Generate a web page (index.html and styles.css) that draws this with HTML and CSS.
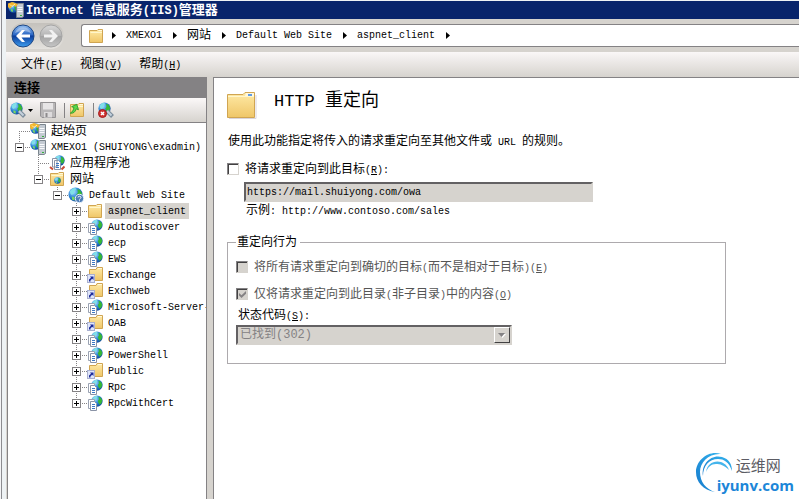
FILE: index.html
```html
<!DOCTYPE html>
<html lang="zh-CN">
<head>
  <meta charset="UTF-8">
  <meta name="viewport" content="width=device-width, initial-scale=1.0">
  <title>Internet 信息服务(IIS)管理器</title>
  <link rel="stylesheet" href="styles.css">
</head>
<body>

  <!-- Shared icons -->
  <svg class="sprite" aria-hidden="true">
    <defs>
      <linearGradient id="gold" x1="0" y1="0" x2="0" y2="1">
        <stop offset="0" stop-color="#ffeaa6"/><stop offset="1" stop-color="#efc668"/>
      </linearGradient>
      <radialGradient id="sea" cx=".35" cy=".3" r=".8">
        <stop offset="0" stop-color="#a8e0ff"/><stop offset=".5" stop-color="#2d86d8"/><stop offset="1" stop-color="#0b3f94"/>
      </radialGradient>
      <linearGradient id="blueball" x1="0" y1="0" x2="0" y2="1">
        <stop offset="0" stop-color="#8fbcf0"/><stop offset=".45" stop-color="#2a66c4"/><stop offset=".5" stop-color="#0b3c9c"/><stop offset="1" stop-color="#3fa0f0"/>
      </linearGradient>
      <linearGradient id="grayball" x1="0" y1="0" x2="0" y2="1">
        <stop offset="0" stop-color="#d8d8d8"/><stop offset=".48" stop-color="#b4b4b4"/><stop offset=".5" stop-color="#a2a2a2"/><stop offset="1" stop-color="#c6c6c6"/>
      </linearGradient>
      <linearGradient id="swoosh" x1="0" y1="1" x2="1" y2="0">
        <stop offset="0" stop-color="#1479cc"/><stop offset="1" stop-color="#35b4ee"/>
      </linearGradient>
    </defs>
    <symbol id="globe" viewBox="0 0 16 16">
      <circle cx="8" cy="8" r="7.5" fill="url(#sea)"/>
      <path d="M2 4.5 5 1.5 8 1 8.5 3 6.500 4.500 6.500 7 4 8.500 2.500 7z" fill="#7fe0e8"/>
      <path d="M10 2 13 3.500 15 7 14 11 11.500 13 10 10.500 9 8 10.500 6z" fill="#36b836"/>
      <path d="M4 10 7 11 7 14.500 4.500 13.500z" fill="#7ad860"/>
    </symbol>
    <symbol id="folder" viewBox="0 0 16 16">
      <path d="M1.500 2.500H9L10 1.500H14.500V14.500H1.500z" fill="url(#gold)" stroke="#d0a552"/>
      <path d="M10.500 2.500H14" stroke="#fff8dc"/>
      <path d="M2.500 4.500H14" stroke="#fff6cc"/>
    </symbol>
    <symbol id="vfolder" viewBox="0 0 16 16">
      <path d="M2.500 2.500H9L10 .5H15.500V13.500H2.500z" fill="url(#gold)" stroke="#d0a552"/>
      <path d="M11 1.500H15" stroke="#fff8dc"/>
      <rect x=".5" y="7.500" width="7" height="8" fill="#dfe5fa" stroke="#a9b0d0"/>
      <path d="M2 14.500V12.500L4 10.800 3 9.500H6.500V13L5.200 11.800 3.500 13.200V14.500z" fill="#1b2a9a"/>
    </symbol>
    <symbol id="app" viewBox="0 0 16 16">
      <use href="#globe" x="4" y="0" width="12" height="12"/>
      <path d="M1.500 4.500H7.500V13.500H1.500z" fill="#fff" stroke="#9aa2b2"/>
      <path d="M3.500 6.500H7.500L9.500 8.500V15.500H3.500z" fill="#fff" stroke="#8a93a6"/>
      <path d="M5 9.500H8M5 11.500H8M5 13.500H8" stroke="#3d78c4"/>
    </symbol>
    <symbol id="pool" viewBox="0 0 16 16">
      <use href="#globe" x="5" y="0" width="11" height="11"/>
      <path d="M3.500 3.500H8V12H3.500zM5.500 5.500H9.500L11.500 7.500V14.500H5.500z" fill="#fff" stroke="#8a93a6"/>
      <path d="M7 8.500H10M7 10.500H10M7 12.500H10" stroke="#3d78c4"/>
      <path d="M1 12 4 14.500M15.500 11.500 12.500 14.500" stroke="#c94a38" stroke-width="2"/>
    </symbol>
    <symbol id="server" viewBox="0 0 16 16">
      <use href="#globe" x="0" y="0" width="11" height="11"/>
      <path d="M8.500 2.500 10 1.500H15.500V14.500L14 15.500H8.500z" fill="#c3cad2" stroke="#7b868e"/>
      <path d="M9.500 5.500H14.500M9.500 7.500H14.500M9.500 9.500H14.500" stroke="#f7f9fb"/>
      <path d="M12 13.500H14" stroke="#36b23c"/>
    </symbol>
    <symbol id="start" viewBox="0 0 16 16">
      <use href="#server"/>
      <path d="M0 1.500 4 0 10 2 8 5 5 3 2 7 0 5z" fill="#f4b62e"/>
      <path d="M2 2.500 4 4.500 7 2" stroke="#fff3b0" fill="none"/>
    </symbol>
    <symbol id="sites" viewBox="0 0 16 16">
      <use href="#folder"/>
      <use href="#globe" x="5" y="6" width="7" height="7"/>
    </symbol>
    <symbol id="site" viewBox="0 0 16 16">
      <use href="#globe" width="15" height="15"/>
      <circle cx="11.500" cy="11.500" r="4.200" fill="#4d7db8" stroke="#e4effa"/>
      <path d="M10 10.500C10 8.800 13 8.800 13 10.500 13 11.500 11.500 11.500 11.500 12.500M11.500 13.300V14.300" fill="none" stroke="#fff"/>
    </symbol>
    <symbol id="connect" viewBox="0 0 16 16">
      <use href="#globe" width="13" height="13"/>
      <path d="M9 9 14.500 14.500" stroke="#7c8c9b" stroke-width="4"/>
      <path d="M9 9 13.500 13.500" stroke="#c5d2dd" stroke-width="2"/>
    </symbol>
    <symbol id="disconnect" viewBox="0 0 16 16">
      <use href="#connect"/>
      <circle cx="4.500" cy="11.500" r="4" fill="#d23430" stroke="#a31d1d"/>
      <path d="M3 10 6 13M6 10 3 13" stroke="#fff" stroke-width="1.500"/>
    </symbol>
    <symbol id="save" viewBox="0 0 16 16">
      <path d="M.5 .5H15.500V15.500H2L.5 14z" fill="#b9b7b8" stroke="#949294"/>
      <path d="M3 1H13V7.500H3z" fill="#e7e5e6"/>
      <path d="M4 10H12V15.500H4z" fill="#dddbdc"/>
      <path d="M5.500 11H7.500V15H5.500z" fill="#8c8a8c"/>
    </symbol>
    <symbol id="up" viewBox="0 0 16 16">
      <use href="#folder"/>
      <path d="M3 12.500C6 12 7.500 9.500 7 6.500H9.500L6 2 2 6H4.500C5 8.500 4.500 11 3 12.500z" fill="#5bd84b" stroke="#2c9a2a" stroke-width=".8" transform="rotate(20 6 7)"/>
    </symbol>
    <symbol id="arrow" viewBox="0 0 4 7"><path d="M0 0 4 3.500 0 7z"/></symbol>
  </svg>

  <div class="window">
    <header class="titlebar">
      <svg class="icon"><use href="#start"/></svg>
      <h1><span class="latin">Internet </span>信息服务<span class="latin">(IIS)</span>管理器</h1>
    </header>

    <div class="navbar">
      <div class="history">
        <button type="button" aria-label="后退">
          <svg width="24" height="24" viewBox="0 0 24 24">
            <circle cx="12" cy="12" r="11" fill="url(#blueball)" stroke="#1d4684"/>
            <path d="M4 9A8.500 8.500 0 0 1 20 9Q12 5 4 9z" fill="#fff" opacity=".35"/>
            <path d="M5 12 11 6H14L10.500 10.500H19V13.500H10.500L14 18H11z" fill="#fff"/>
          </svg>
        </button>
        <button type="button" aria-label="前进">
          <svg width="24" height="24" viewBox="0 0 24 24">
            <circle cx="12" cy="12" r="11" fill="url(#grayball)" stroke="#a5a5a5"/>
            <path d="M19 12 13 6H10L13.500 10.500H5V13.500H13.500L10 18H13z" fill="#f2f2f2"/>
          </svg>
        </button>
      </div>
      <nav class="address" aria-label="路径">
        <svg class="icon"><use href="#folder"/></svg>
        <svg class="arrow"><use href="#arrow"/></svg>
        <a href="#" class="latin">XMEXO1</a>
        <svg class="arrow"><use href="#arrow"/></svg>
        <a href="#">网站</a>
        <svg class="arrow"><use href="#arrow"/></svg>
        <a href="#" class="latin">Default Web Site</a>
        <svg class="arrow"><use href="#arrow"/></svg>
        <a href="#" class="latin">aspnet_client</a>
        <svg class="arrow"><use href="#arrow"/></svg>
      </nav>
    </div>

    <div class="menubar">
      <button type="button">文件<span class="latin">(<u>F</u>)</span></button>
      <button type="button">视图<span class="latin">(<u>V</u>)</span></button>
      <button type="button">帮助<span class="latin">(<u>H</u>)</span></button>
    </div>

    <div class="workspace">
      <aside class="connections">
        <h2>连接</h2>
        <div class="toolbar">
          <button type="button" class="split" aria-label="连接"><svg class="icon"><use href="#connect"/></svg><svg width="5" height="3"><path d="M0 0H5L2.500 3z"/></svg></button>
          <button type="button" aria-label="保存"><svg class="icon"><use href="#save"/></svg></button>
          <span class="separator"></span>
          <button type="button" aria-label="向上"><svg class="icon"><use href="#up"/></svg></button>
          <span class="separator"></span>
          <button type="button" aria-label="断开"><svg class="icon"><use href="#disconnect"/></svg></button>
        </div>

        <ul class="tree">
          <li><div class="row leaf"><svg class="icon"><use href="#start"/></svg><span class="label">起始页</span></div></li>
          <li>
            <div class="row"><button type="button" class="expander" aria-label="折叠"></button><svg class="icon"><use href="#server"/></svg><span class="label latin">XMEXO1 (SHUIYONG\exadmin)</span></div>
            <ul>
              <li><div class="row leaf"><svg class="icon"><use href="#pool"/></svg><span class="label">应用程序池</span></div></li>
              <li>
                <div class="row"><button type="button" class="expander" aria-label="折叠"></button><svg class="icon"><use href="#sites"/></svg><span class="label">网站</span></div>
                <ul>
                  <li>
                    <div class="row"><button type="button" class="expander" aria-label="折叠"></button><svg class="icon"><use href="#site"/></svg><span class="label latin">Default Web Site</span></div>
                    <ul>
                      <li><div class="row"><button type="button" class="expander closed" aria-label="展开"></button><svg class="icon"><use href="#folder"/></svg><span class="label latin selected">aspnet_client</span></div></li>
                      <li><div class="row"><button type="button" class="expander closed" aria-label="展开"></button><svg class="icon"><use href="#app"/></svg><span class="label latin">Autodiscover</span></div></li>
                      <li><div class="row"><button type="button" class="expander closed" aria-label="展开"></button><svg class="icon"><use href="#app"/></svg><span class="label latin">ecp</span></div></li>
                      <li><div class="row"><button type="button" class="expander closed" aria-label="展开"></button><svg class="icon"><use href="#app"/></svg><span class="label latin">EWS</span></div></li>
                      <li><div class="row"><button type="button" class="expander closed" aria-label="展开"></button><svg class="icon"><use href="#vfolder"/></svg><span class="label latin">Exchange</span></div></li>
                      <li><div class="row"><button type="button" class="expander closed" aria-label="展开"></button><svg class="icon"><use href="#vfolder"/></svg><span class="label latin">Exchweb</span></div></li>
                      <li><div class="row"><button type="button" class="expander closed" aria-label="展开"></button><svg class="icon"><use href="#app"/></svg><span class="label latin">Microsoft-Server-</span></div></li>
                      <li><div class="row"><button type="button" class="expander closed" aria-label="展开"></button><svg class="icon"><use href="#vfolder"/></svg><span class="label latin">OAB</span></div></li>
                      <li><div class="row"><button type="button" class="expander closed" aria-label="展开"></button><svg class="icon"><use href="#app"/></svg><span class="label latin">owa</span></div></li>
                      <li><div class="row"><button type="button" class="expander closed" aria-label="展开"></button><svg class="icon"><use href="#app"/></svg><span class="label latin">PowerShell</span></div></li>
                      <li><div class="row"><button type="button" class="expander closed" aria-label="展开"></button><svg class="icon"><use href="#vfolder"/></svg><span class="label latin">Public</span></div></li>
                      <li><div class="row"><button type="button" class="expander closed" aria-label="展开"></button><svg class="icon"><use href="#app"/></svg><span class="label latin">Rpc</span></div></li>
                      <li><div class="row"><button type="button" class="expander closed" aria-label="展开"></button><svg class="icon"><use href="#app"/></svg><span class="label latin">RpcWithCert</span></div></li>
                    </ul>
                  </li>
                </ul>
              </li>
            </ul>
          </li>
        </ul>
      </aside>

      <main class="content">
        <div class="heading">
          <svg width="30" height="30" viewBox="0 0 30 30">
            <path d="M2 28.500H29V5" fill="none" stroke="#d9d5dc"/>
            <path d="M.5 4.500H16L18 2.500H27.500V27.500H.5z" fill="url(#gold)" stroke="#d0a552"/>
            <path d="M18 6 19 3H27V6z" fill="#fff8e0"/>
            <path d="M21 4H25V6H21z" fill="#5f9be6"/>
            <path d="M1 6.500H27" stroke="#fff6cc"/>
          </svg>
          <h2><span class="latin">HTTP </span>重定向</h2>
        </div>
        <p class="intro">使用此功能指定将传入的请求重定向至其他文件或<span class="latin"> URL </span>的规则。</p>

        <form>
          <div class="check">
            <input type="checkbox" id="redirect">
            <label for="redirect">将请求重定向到此目标<span class="latin">(<u>R</u>):</span></label>
          </div>
          <div class="target">
            <input type="text" class="latin" aria-label="目标" value="https://mail.shuiyong.com/owa" disabled>
            <p>示例<span class="latin">: http://www.contoso.com/sales</span></p>
          </div>

          <fieldset>
            <legend>重定向行为</legend>
            <div class="check">
              <input type="checkbox" id="exact" disabled>
              <label for="exact">将所有请求重定向到确切的目标<span class="latin">(</span>而不是相对于目标<span class="latin">)(<u>E</u>)</span></label>
            </div>
            <div class="check">
              <input type="checkbox" id="only" checked disabled>
              <label for="only">仅将请求重定向到此目录<span class="latin">(</span>非子目录<span class="latin">)</span>中的内容<span class="latin">(<u>O</u>)</span></label>
            </div>
            <label class="status-label" for="status">状态代码<span class="latin">(<u>S</u>):</span></label>
            <div class="select">
              <select id="status" disabled><option>已找到(302)</option></select>
              <span class="drop"><svg width="8" height="5"><path d="M1 1H8L4.500 5z" fill="#fff"/><path d="M0 0H7L3.500 4z" fill="#848284"/></svg></span>
            </div>
          </fieldset>
        </form>
      </main>
    </div>
  </div>

  <div class="watermark">
    <svg width="40" height="42" viewBox="0 0 40 42" fill="none">
      <path d="M20 40C8 38 1 30 1 20 1 8 14-2 26 2 14 1 5 10 5 20 5 30 11 37 20 40z" fill="url(#swoosh)"/>
      <path d="M8 24C6 12 16 2 27 5 34 7 37 12 37 19 34 10 29 7 23 7 14 7 8 14 8 24z" fill="url(#swoosh)"/>
      <path d="M11 20C12 12 19 8 26 10 31 12 33 15 34 18 29 13 25 12 21 12 16 12 13 15 11 20z" fill="#45b5ec"/>
    </svg>
    <div class="brand">
      <span class="brand-name">运维网</span>
      <span class="brand-url">iyunv.com</span>
    </div>
  </div>

</body>
</html>
```

FILE: styles.css
```css
* {
  box-sizing: border-box;
}

body {
  margin: 0;
  height: 100vh;
  overflow: hidden;
  padding: 1px 0 0 6px;
  background: linear-gradient(90deg, #f4f4f6 1px, #8c8c90 1px, #8c8c90 2px, #eef2f4 2px);
  font-family: "Liberation Mono", "Noto Sans CJK SC", monospace;
  font-size: 12px;
  line-height: 16px;
  color: #000;
}

h1, h2, p, ul, fieldset {
  margin: 0;
  padding: 0;
}

button {
  margin: 0;
  padding: 0;
  border: none;
  background: none;
  font: inherit;
  color: inherit;
}

/* Half-width characters are half as wide as the 12px Chinese ones */
.latin {
  font-size: 10px;
  white-space: pre;
}

.sprite {
  position: absolute;
  width: 0;
  height: 0;
}

.icon {
  flex: none;
  width: 16px;
  height: 16px;
}

.window {
  display: flex;
  flex-direction: column;
  height: 100%;
  background: #d6d3ce;
}

/* Title bar */
.titlebar {
  display: flex;
  align-items: center;
  gap: 2px;
  height: 18px;
  padding-left: 2px;
  background: #08246b;
  color: #fff;
}

.titlebar h1 {
  padding-top: 2px;
  font-size: 13px;
}

.titlebar .latin {
  font-size: 12px;
}

/* Back, forward and the address */
.navbar {
  display: flex;
  align-items: center;
  height: 33px;
  padding-left: 4px;
}

.history {
  display: flex;
  gap: 4px;
  padding: 1px;
  border-radius: 14px;
  background: linear-gradient(#c4c1bc, #e4e2de);
}

.history button,
.history svg {
  display: block;
}

.address {
  display: flex;
  flex: 1;
  align-items: center;
  height: 23px;
  margin-left: 17px;
  padding-left: 6px;
  border: 1px solid #848284;
  border-right: none;
  border-radius: 3px 0 0 3px;
  background: #fff;
}

.address a {
  color: #000;
  text-decoration: none;
}

.arrow {
  width: 4px;
  height: 7px;
  margin: 0 10px 0 11px;
}

.icon + .arrow {
  margin-left: 8px;
}

/* Menu */
.menubar {
  display: flex;
  gap: 17px;
  height: 25px;
  padding: 2px 0 0 15px;
  background: linear-gradient(#faf7f7, #d6d3ce);
}

.workspace {
  display: flex;
  flex: 1;
  gap: 6px;
  min-height: 0;
}

/* Connections pane */
.connections {
  flex: none;
  width: 200px;
  margin-left: 1px;
  border: 1px solid #848284;
  border-bottom: none;
  background: #fff;
  overflow: hidden;
}

.connections h2 {
  padding: 3px 6px 1px;
  background: #848284;
  font-size: 13px;
  line-height: 16px;
}

.toolbar {
  display: flex;
  align-items: center;
  height: 25px;
  padding-left: 2px;
  border-bottom: 1px solid #848284;
  background: linear-gradient(#fbf8f8, #d6d3ce);
}

.toolbar button {
  display: flex;
  align-items: center;
  gap: 2px;
}

.toolbar .split {
  margin-right: 7px;
}

.separator {
  width: 1px;
  height: 15px;
  margin: 0 4px 0 8px;
  background: #848284;
}

/* Tree, with dotted lines drawn as backgrounds */
.tree,
.tree ul {
  list-style: none;
}

.tree {
  padding-left: 7px;
}

.tree ul {
  padding-left: 19px;
}

.tree li {
  background: repeating-linear-gradient(#848284 0 1px, transparent 1px 2px) 4px 0 / 1px 100% no-repeat;
}

.tree > li:first-child {
  background-position: 4px 8px;
}

.tree li:last-child {
  background-size: 1px 8px;
}

.row {
  display: flex;
  align-items: center;
  height: 16px;
  background: repeating-linear-gradient(90deg, #848284 0 1px, transparent 1px 2px) 4px 8px / 12px 1px no-repeat;
}

.leaf {
  padding-left: 15px;
}

.expander {
  flex: none;
  width: 9px;
  height: 9px;
  margin-right: 6px;
  border: 1px solid #848284;
  background: linear-gradient(#000, #000) center / 5px 1px no-repeat, #fff;
}

.expander.closed {
  background: linear-gradient(#000, #000) center / 5px 1px no-repeat, linear-gradient(#000, #000) center / 1px 5px no-repeat, #fff;
}

.label {
  height: 16px;
  margin-left: 2px;
  padding: 1px 3px 0;
  white-space: pre;
}

.selected {
  background: #d6d3ce;
}

/* Redirect page */
.content {
  flex: 1;
  min-width: 0;
  padding: 12px 73px 0 13px;
  border-top: 1px solid #848284;
  border-left: 1px solid #848284;
  background: #fff;
}

.heading {
  display: flex;
  gap: 17px;
}

.heading h2 {
  font-size: 18px;
  font-weight: normal;
  line-height: 22px;
}

.heading .latin {
  font-size: 17px;
}

.intro {
  margin: 14px 0 10px;
  padding-left: 1px;
}

.check {
  display: flex;
  align-items: center;
  gap: 6px;
  height: 16px;
}

.check label {
  padding-top: 2px;
}

.check input {
  appearance: none;
  flex: none;
  width: 12px;
  height: 12px;
  margin: 0;
  border: 1px solid #d6d3ce;
  border-top-color: #848284;
  border-left-color: #848284;
  box-shadow: inset 1px 1px #424142;
  background: #fff;
}

.check input:disabled {
  background: #d6d3ce;
}

.check input:checked::before {
  content: "";
  display: block;
  width: 7px;
  height: 7px;
  margin: 2px;
  background: #848284;
  clip-path: polygon(0 28%, 36% 62%, 100% 0, 100% 38%, 36% 100%, 0 66%);
}

.check input:disabled + label {
  color: #555;
}

.target {
  display: flex;
  flex-direction: column;
  max-width: 366px;
  margin-top: 5px;
  padding-left: 17px;
}

.target input {
  width: 100%;
  height: 20px;
  padding: 0 1px;
  border: 2px solid #d6d3ce;
  border-top-color: #636163;
  border-left-color: #636163;
  background: #d6d3ce;
  font-family: inherit;
  color: #000;
}

.target p {
  padding: 1px 2px;
}

fieldset {
  display: flex;
  flex-direction: column;
  min-width: 0;
  margin-top: 12px;
  padding: 8px 8px 18px;
  border: 1px solid #adaaad;
}

legend {
  padding: 2px 3px 0 1px;
}

fieldset .check {
  margin-bottom: 11px;
}

fieldset .check + .status-label {
  margin-top: -6px;
}

.status-label {
  padding: 1px 2px 0;
}

.select {
  display: flex;
  max-width: 276px;
  height: 20px;
  border: 2px solid #d6d3ce;
  border-top-color: #636163;
  border-left-color: #636163;
  background: #d6d3ce;
}

.select select {
  appearance: none;
  flex: 1;
  padding: 0 2px;
  border: none;
  background: none;
  font: inherit;
  color: #848284;
  opacity: 1;
}

.drop {
  display: flex;
  align-items: center;
  justify-content: center;
  width: 16px;
  border: 1px solid #fff;
  border-right-color: #424142;
  border-bottom-color: #424142;
}

/* Site logo over the corner of the page */
.watermark {
  position: absolute;
  right: 5px;
  bottom: 5px;
  display: flex;
}

.brand {
  display: flex;
  flex-direction: column;
  margin-left: -18px;
  padding-top: 1px;
}

.brand-name {
  padding-left: 19px;
  font-family: "Noto Sans CJK SC", sans-serif;
  font-size: 15px;
  line-height: 23px;
  color: #5c5c64;
}

.brand-url {
  font-family: "Open Sans", sans-serif;
  font-size: 15px;
  font-weight: bold;
  line-height: 18px;
  color: #1c86d8;
}
```
